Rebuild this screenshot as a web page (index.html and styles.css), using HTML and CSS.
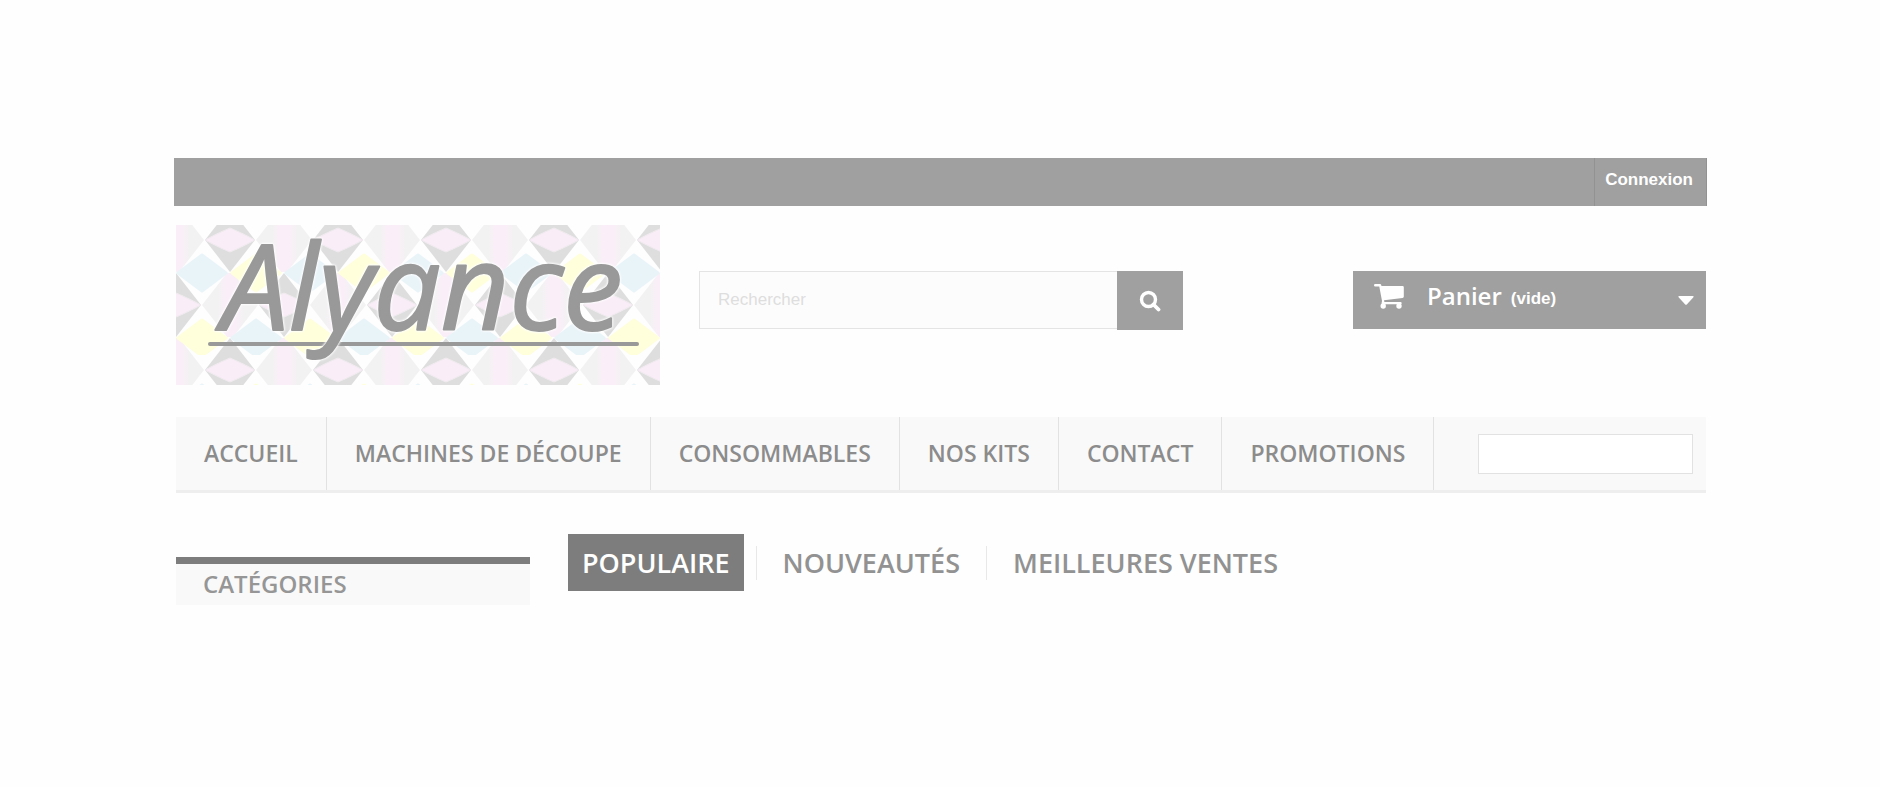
FILE: index.html
```html
<!DOCTYPE html>
<html lang="fr">
<head>
  <meta charset="UTF-8" />
  <meta name="viewport" content="width=device-width, initial-scale=1.0" />
  <title>Alyance</title>
  <link rel="stylesheet" href="styles.css">
</head>
<body>
  <div class="page">
    <!-- Top bar -->
    <div class="topbar">
      <a class="login" href="#">Connexion</a>
    </div>

    <!-- Header -->
    <header class="header">
      <a class="logo" href="#">
        <svg viewBox="0 0 484 160" role="img" aria-label="Alyance">
          <defs>
            <linearGradient id="stripe">
              <stop offset="0.3" stop-color="#f3f2f3" />
              <stop offset="0.42" stop-color="#faeff8" />
              <stop offset="0.6" stop-color="#faeff8" />
              <stop offset="0.75" stop-color="#f2f2f2" />
            </linearGradient>
            <g id="lens">
              <path d="M-25 0 0-32 25 0 0 32z" fill="#dedede" />
              <path d="M-25 0Q-8-9 0-12 8-9 25 0 8 9 0 12-8 9-25 0z" fill="#f9edf7" stroke="#efebee" />
            </g>
            <path id="pale" d="M-28 0-3-32H3L28 0 3 32H-3z" fill="url(#stripe)" />
            <path id="tile" d="M-24 0 0-18 24 0 0 18z" stroke-width="3" stroke-linejoin="round" />
            <pattern id="diamonds" width="108" height="130" patternUnits="userSpaceOnUse">
              <rect width="108" height="130" fill="#fefefe" />
              <use href="#pale" x="0" y="15" />
              <use href="#pale" x="108" y="15" />
              <use href="#pale" x="0" y="145" />
              <use href="#pale" x="108" y="145" />
              <use href="#lens" x="54" y="15" />
              <use href="#lens" x="54" y="145" />
              <use href="#lens" x="0" y="80" />
              <use href="#lens" x="108" y="80" />
              <use href="#pale" x="54" y="80" />
              <use href="#tile" x="26" y="48" fill="#e9f4f9" stroke="#e9f4f9" />
              <use href="#tile" x="80" y="48" fill="#ffffdc" stroke="#ffffdc" />
              <use href="#tile" x="26" y="113" fill="#ffffdc" stroke="#ffffdc" />
              <use href="#tile" x="80" y="113" fill="#e9f4f9" stroke="#e9f4f9" />
            </pattern>
          </defs>
          <rect width="484" height="160" fill="url(#diamonds)" />
          <path class="logo-line" d="M34 119H461" />
          <text class="logo-text" x="46" y="105">Alyance</text>
        </svg>
      </a>

      <form class="search">
        <input type="text" class="search-bar" placeholder="Rechercher" aria-label="Rechercher" />
        <button type="button" class="search-btn" aria-label="Lancer la recherche">
          <svg width="22" height="22" viewBox="0 0 22 22">
            <circle cx="9.5" cy="9.5" r="7" fill="none" stroke="#fff" stroke-width="3.4" />
            <path d="M14.5 14.5 19.5 19.5" stroke="#fff" stroke-width="3.8" stroke-linecap="round" />
          </svg>
        </button>
      </form>

      <a class="cart" href="#">
        <svg class="cart-icon" width="30" height="25" viewBox="0 0 30 25">
          <path d="M1.2 0H6.2Q7.2 0 7.5 2H28.5Q29.8 2 29.8 3.3V12.5Q29.8 13.8 28.5 14L10 16.2 10.4 18H26.5Q27.7 18 27.7 19.2T26.5 20.2H8.6Q7.5 20.2 7.6 19L8 17 5.3 2.4H1.2Q0 2.4 0 1.2T1.2 0z" fill="#fff" />
          <circle cx="9.2" cy="22" r="2.7" fill="#fff" />
          <circle cx="25" cy="22" r="2.7" fill="#fff" />
        </svg>
        <b class="cart-title">Panier</b>
        <span class="cart-empty">(vide)</span>
        <svg class="cart-caret" width="16" height="9" viewBox="0 0 16 9">
          <path d="M1.5 0H14.5Q16.5 0 15.2 1.6L9 8.3Q8 9.3 7 8.3L.8 1.6Q-.5 0 1.5 0z" fill="#fff" />
        </svg>
      </a>
    </header>

    <!-- Main menu -->
    <nav class="menu">
      <a href="#">ACCUEIL</a>
      <a href="#">MACHINES DE DÉCOUPE</a>
      <a href="#">CONSOMMABLES</a>
      <a href="#">NOS KITS</a>
      <a href="#">CONTACT</a>
      <a href="#">PROMOTIONS</a>
      <input type="text" class="menu-search" aria-label="Recherche" />
    </nav>

    <!-- Content -->
    <main class="columns">
      <aside class="categories">
        <h2>CATÉGORIES</h2>
      </aside>
      <div class="tabs">
        <a class="active" href="#">POPULAIRE</a>
        <a href="#">NOUVEAUTÉS</a>
        <a href="#">MEILLEURES VENTES</a>
      </div>
    </main>
  </div>
</body>
</html>
```

FILE: styles.css
```css
* {
  box-sizing: border-box;
}
body {
  margin: 0;
  background: #fefefe;
  color: #8c8c8c;
  font-family: "Open Sans", sans-serif;
}
a {
  color: inherit;
  text-decoration: none;
}
.page {
  padding: 158px 174px 0 176px;
}
.topbar {
  display: flex;
  justify-content: flex-end;
  height: 48px;
  margin: 0 -1px 0 -2px;
  background: #a0a0a0;
}
.login {
  padding: 12px 13px 0 10px;
  border-left: 1px solid #929292;
  border-right: 1px solid #929292;
  color: #fff;
  font: bold 17px/20px "Liberation Sans", Arial, sans-serif;
}
.header {
  display: flex;
  align-items: flex-start;
  padding-top: 19px;
}
.logo {
  width: 484px;
}
.logo svg {
  display: block;
  width: 100%;
  overflow: visible;
}
.logo-text {
  fill: #999;
  stroke: #999;
  stroke-width: 2px;
  stroke-linejoin: round;
  filter: drop-shadow(0 0 1px #fff) drop-shadow(0 0 1px #fff);
  font: italic 400 119px "Open Sans", sans-serif;
}
.logo-line {
  fill: none;
  stroke: #999;
  stroke-width: 4px;
  stroke-linecap: round;
}
.search {
  display: flex;
  width: 484px;
  margin: 46px 0 0 39px;
}
.search-bar {
  flex: 1;
  min-width: 0;
  height: 58px;
  padding: 0 18px;
  border: 1px solid #e4e4e4;
  border-right: 0;
  background: #fcfcfc;
  font: 17px "Liberation Sans", Arial, sans-serif;
}
.search-bar::placeholder {
  color: #dedede;
}
.search-btn {
  width: 66px;
  height: 59px;
  padding: 0;
  border: 0;
  background: #a0a0a0;
}
.search-btn svg {
  display: block;
  margin: 0 auto;
}
.cart {
  display: flex;
  align-items: center;
  width: 353px;
  height: 58px;
  margin: 46px 0 0 auto;
  padding: 0 12px 8px 21px;
  background: #a0a0a0;
  color: #fff;
}
.cart-icon {
  margin-right: 23px;
}
.cart-title {
  font-size: 24px;
  font-weight: 600;
  line-height: 34px;
}
.cart-empty {
  margin-left: 9px;
  padding-top: 6px;
  font: bold 17px "Liberation Sans", Arial, sans-serif;
}
.cart-caret {
  margin: 8px 0 0 auto;
}
.menu {
  display: flex;
  align-items: center;
  margin-top: 32px;
  border-bottom: 3px solid #eee;
  background: #f9f9f9;
}
.menu a {
  padding: 20px 28px;
  border-right: 1px solid #e2e2e2;
  font-size: 23px;
  font-weight: 600;
  line-height: 33px;
}
.menu-search {
  width: 215px;
  height: 40px;
  margin: 0 13px 0 auto;
  border: 1px solid #e2e2e2;
  background: #fff;
}
.columns {
  display: flex;
  align-items: flex-start;
  padding-top: 41px;
}
.categories {
  width: 354px;
  margin-top: 23px;
  border-top: 7px solid #7d7d7d;
  background: #f9f9f9;
}
.categories h2 {
  margin: 0;
  padding: 3px 27px 5px;
  color: #969696;
  font-size: 24px;
  font-weight: 600;
  line-height: 33px;
}
.tabs {
  display: flex;
  align-items: center;
  margin-left: 38px;
}
.tabs a {
  padding: 0 26px;
  border-left: 1px solid #e8e8e8;
  color: #929292;
  font-size: 27px;
  font-weight: 600;
  line-height: 34px;
}
.tabs .active {
  margin-right: 12px;
  padding: 12px 14px 11px;
  border-left: 0;
  background: #7d7d7d;
  color: #fff;
}
```
